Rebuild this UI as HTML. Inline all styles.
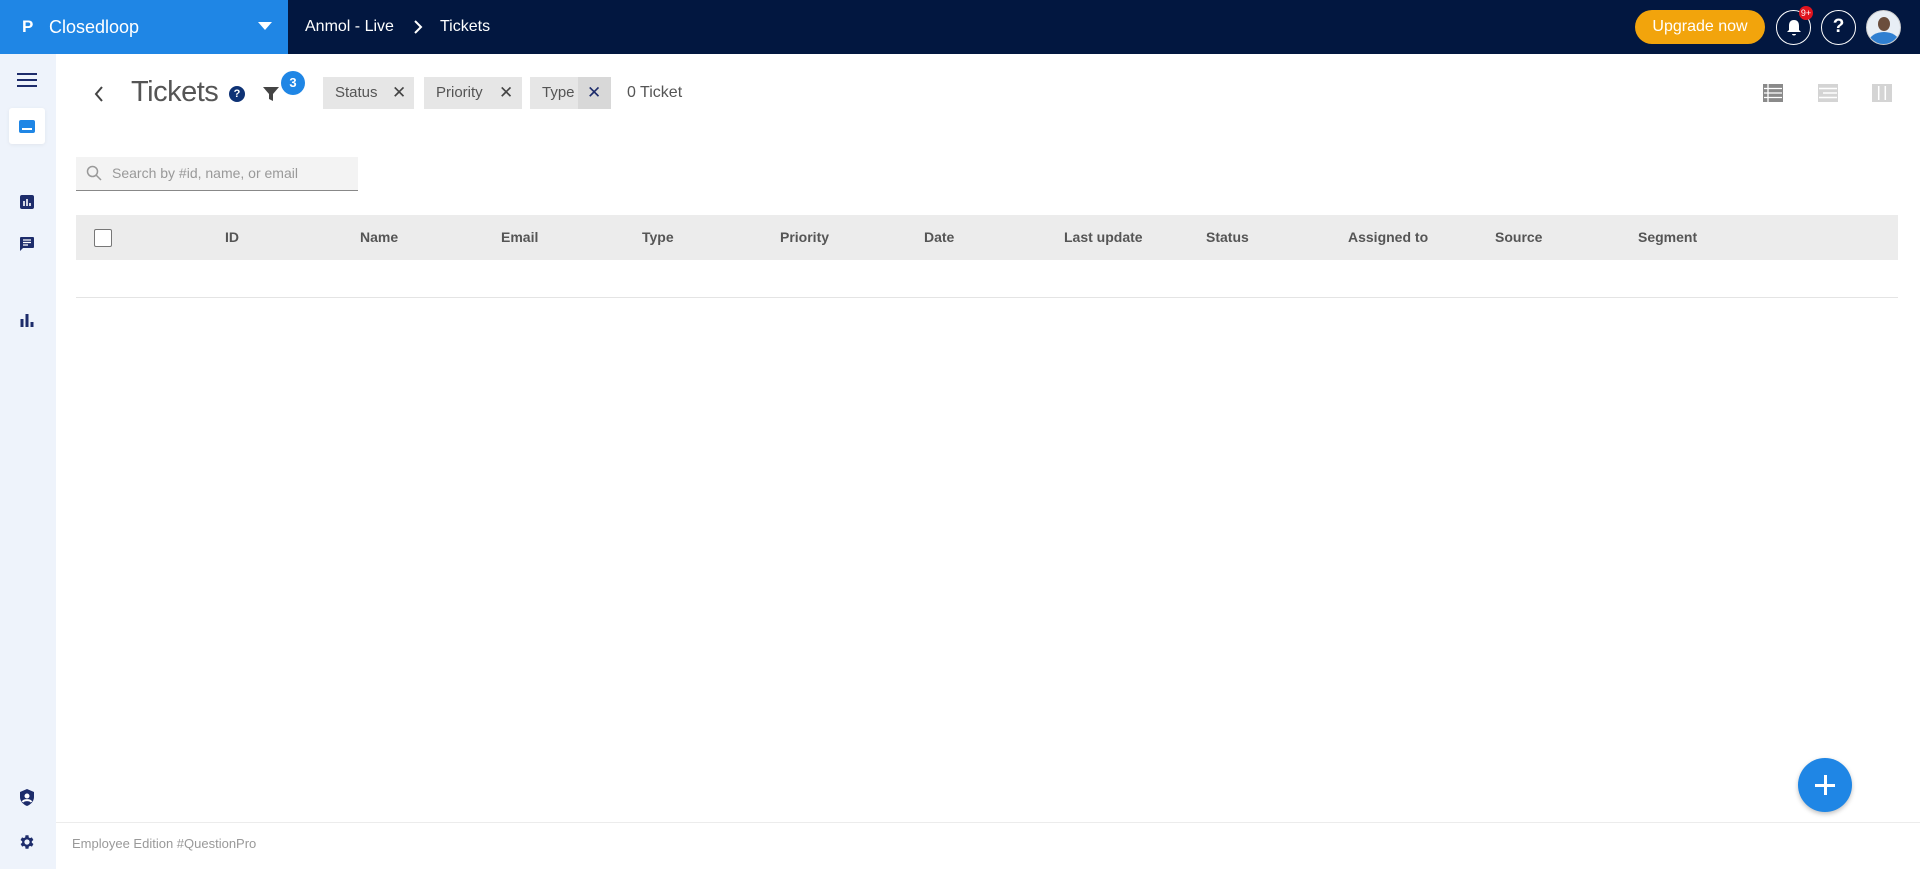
<!DOCTYPE html>
<html><head><meta charset="utf-8"><style>
*{box-sizing:border-box;margin:0;padding:0}
body{width:1920px;height:869px;overflow:hidden;background:#fff;font-family:"Liberation Sans",sans-serif;position:relative;color:#444}
.abs{position:absolute}
.top{left:0;top:0;width:1920px;height:54px;background:#021740}
.brand{left:0;top:0;width:288px;height:54px;background:#1f86e5;color:#fff}
.side{left:0;top:54px;width:56px;height:815px;background:#eef3fb}
.chip{top:77px;height:32px;background:#e6e6e6;font-size:15px;color:#555;line-height:32px;padding-left:12px}
.chip .x{position:absolute;top:0;font-size:17px;color:#444}
.th{top:215px;height:45px;line-height:45px;font-size:14px;font-weight:bold;color:#555}
</style></head><body>
<div class="abs top"></div>
<div class="abs brand">
 <div class="abs" style="left:22px;top:17px;font-size:17px;font-weight:bold;color:#fff">P</div>
 <div class="abs" style="left:49px;top:17px;font-size:18px">Closedloop</div>
 <svg class="abs" style="left:258px;top:22px" width="14" height="9"><path d="M0 0H14L7 8Z" fill="#fff"/></svg>
</div>
<div class="abs" style="left:305px;top:18px;color:#fff;font-size:16px">Anmol - Live</div>
<svg class="abs" style="left:413px;top:20px" width="10" height="14"><path d="M2 1L8 7L2 13" stroke="#fff" stroke-width="2" fill="none"/></svg>
<div class="abs" style="left:440px;top:18px;color:#fff;font-size:16px">Tickets</div>
<div class="abs" style="left:1635px;top:10px;width:130px;height:34px;border-radius:17px;background:#f2a40c;color:#fff;font-size:16px;text-align:center;line-height:34px">Upgrade now</div>
<div class="abs" style="left:1776px;top:10px;width:35px;height:35px;border:1.5px solid #fff;border-radius:50%"></div>
<svg class="abs" style="left:1785px;top:18px" width="18" height="20"><path d="M9 2C5 2 4 5 4 8V12L2 14H16L14 12V8C14 5 13 2 9 2Z M7 16H11C11 18 7 18 7 16Z" fill="#fff"/></svg>
<div class="abs" style="left:1799px;top:6px;width:14px;height:14px;border-radius:50%;background:#e0141e;color:#fff;font-size:9px;text-align:center;line-height:14px">9+</div>
<div class="abs" style="left:1821px;top:10px;width:35px;height:35px;border:1.5px solid #fff;border-radius:50%;color:#fff;font-weight:bold;font-size:19px;text-align:center;line-height:32px">?</div>
<div class="abs" style="left:1866px;top:10px;width:35px;height:35px;border-radius:50%;background:#e8eef5;border:1px solid #ccc;overflow:hidden">
 <div style="position:absolute;left:11px;top:6px;width:12px;height:14px;border-radius:50%;background:#6b4e3d"></div>
 <div style="position:absolute;left:2px;top:21px;width:30px;height:20px;border-radius:50%;background:#2f7fd1"></div>
</div>

<div class="abs side"></div>
<div class="abs" style="left:17px;top:73px;width:20px;height:2px;background:#1d2c6b;box-shadow:0 6px 0 #1d2c6b,0 12px 0 #1d2c6b"></div>
<div class="abs" style="left:9px;top:108px;width:36px;height:36px;background:#fff;border-radius:3px;box-shadow:0 1px 4px rgba(0,0,0,.06)"></div>
<div class="abs" style="left:19px;top:120px;width:16px;height:13px;background:#1f86e5;border-radius:2px"><div style="position:absolute;left:3px;top:8px;width:10px;height:2px;background:#fff"></div></div>
<svg class="abs" style="left:20px;top:195px" width="14" height="14"><rect width="14" height="14" rx="2" fill="#1d2c6b"/><path d="M4 11V6M7 11V4M10 11V8" stroke="#fff" stroke-width="1.6"/></svg>
<svg class="abs" style="left:19px;top:236px" width="16" height="16"><path d="M1 2Q1 1 2 1H14Q15 1 15 2V11Q15 12 14 12H4L1 15Z" fill="#1d2c6b"/><path d="M4 4H12M4 6.5H12M4 9H9" stroke="#fff" stroke-width="1.3"/></svg>
<svg class="abs" style="left:20px;top:313px" width="14" height="14"><path d="M2 14V6M7 14V1M12 14V9" stroke="#1d2c6b" stroke-width="3"/></svg>
<svg class="abs" style="left:18px;top:788px" width="18" height="19"><path d="M9 1L16 4V9C16 13 13 16.5 9 18C5 16.5 2 13 2 9V4Z" fill="#1d2c6b"/><circle cx="9" cy="8" r="2.5" fill="#fff"/><path d="M4.5 14C6 11.5 12 11.5 13.5 14" stroke="#fff" stroke-width="2" fill="none"/></svg>
<svg class="abs" style="left:18px;top:833px" width="18" height="18" viewBox="0 0 24 24"><path fill="#1d2c6b" d="M19.4 13a7.5 7.5 0 000-2l2.1-1.6-2-3.5-2.5 1a7 7 0 00-1.7-1L15 3h-4l-.4 2.9a7 7 0 00-1.7 1l-2.5-1-2 3.5L6.6 11a7.5 7.5 0 000 2l-2.1 1.6 2 3.5 2.5-1a7 7 0 001.7 1L11 21h4l.4-2.9a7 7 0 001.7-1l2.5 1 2-3.5zM13 15.5a3.5 3.5 0 110-7 3.5 3.5 0 010 7z" transform="translate(-1 0)"/></svg>

<svg class="abs" style="left:94px;top:86px" width="10" height="16"><path d="M8 1L2 8L8 15" stroke="#444" stroke-width="2" fill="none"/></svg>
<div class="abs" style="left:131px;top:76px;font-size:29px;color:#555;letter-spacing:-0.5px">Tickets</div>
<div class="abs" style="left:229px;top:86px;width:16px;height:16px;border-radius:50%;background:#0e3275;color:#fff;font-size:11px;font-weight:bold;text-align:center;line-height:16px">?</div>
<svg class="abs" style="left:263px;top:86px" width="16" height="16"><path d="M0 1H16L10 8V15L6 13V8Z" fill="#444"/></svg>
<div class="abs" style="left:281px;top:71px;width:24px;height:24px;border-radius:50%;background:#1f86e5;color:#fff;font-size:13px;font-weight:bold;text-align:center;line-height:24px">3</div>
<div class="abs chip" style="left:323px;width:91px">Status<span class="x" style="left:69px">✕</span></div>
<div class="abs chip" style="left:424px;width:98px">Priority<span class="x" style="left:75px">✕</span></div>
<div class="abs chip" style="left:530px;width:81px">Type<div style="position:absolute;left:48px;top:0;width:33px;height:32px;background:#d8d8d8"></div><span class="x" style="left:57px;color:#1d2c6b">✕</span></div>
<div class="abs" style="left:627px;top:84px;font-size:16px;color:#555">0 Ticket</div>

<svg class="abs" style="left:1763px;top:84px" width="20" height="18"><rect width="20" height="18" fill="#8a8a8a"/><path d="M1 4.5H19M1 9H19M1 13.5H19M5 0V18" stroke="#fff" stroke-width="1.3"/></svg>
<svg class="abs" style="left:1818px;top:84px" width="20" height="18"><rect width="20" height="18" fill="#d4d4d4"/><path d="M1 4.5H19M5 9H19M1 13.5H19" stroke="#fff" stroke-width="1.5"/></svg>
<svg class="abs" style="left:1872px;top:84px" width="20" height="18"><rect width="20" height="18" fill="#d4d4d4"/><path d="M6.7 1V17M13.3 1V17" stroke="#fff" stroke-width="1.5"/><rect x="1.5" y="1.5" width="17" height="15" fill="none" stroke="#d4d4d4"/></svg>

<div class="abs" style="left:76px;top:157px;width:282px;height:34px;background:#f3f3f3;border-bottom:1.5px solid #888"></div>
<svg class="abs" style="left:86px;top:165px" width="16" height="17"><circle cx="6.5" cy="6.5" r="5" stroke="#999" stroke-width="1.5" fill="none"/><path d="M10 10L15 15" stroke="#999" stroke-width="1.5"/></svg>
<div class="abs" style="left:112px;top:165px;font-size:14px;color:#999">Search by #id, name, or email</div>

<div class="abs" style="left:76px;top:215px;width:1822px;height:45px;background:#ececec"></div>
<div class="abs" style="left:94px;top:229px;width:18px;height:18px;border:1px solid #777;border-radius:2px;background:#fff"></div>
<div class="abs th" style="left:225px">ID</div>
<div class="abs th" style="left:360px">Name</div>
<div class="abs th" style="left:501px">Email</div>
<div class="abs th" style="left:642px">Type</div>
<div class="abs th" style="left:780px">Priority</div>
<div class="abs th" style="left:924px">Date</div>
<div class="abs th" style="left:1064px">Last update</div>
<div class="abs th" style="left:1206px">Status</div>
<div class="abs th" style="left:1348px">Assigned to</div>
<div class="abs th" style="left:1495px">Source</div>
<div class="abs th" style="left:1638px">Segment</div>
<div class="abs" style="left:76px;top:297px;width:1822px;height:1px;background:#e4e4e4"></div>

<div class="abs" style="left:1798px;top:758px;width:54px;height:54px;border-radius:50%;background:#1f86e5;box-shadow:0 2px 5px rgba(0,0,0,.25)"></div>
<div class="abs" style="left:1815px;top:784px;width:20px;height:3px;background:#fff"></div>
<div class="abs" style="left:1824px;top:775px;width:3px;height:20px;background:#fff"></div>

<div class="abs" style="left:56px;top:822px;width:1864px;height:1px;background:#ececec"></div>
<div class="abs" style="left:72px;top:836px;font-size:13px;color:#999">Employee Edition #QuestionPro</div>
</body></html>
